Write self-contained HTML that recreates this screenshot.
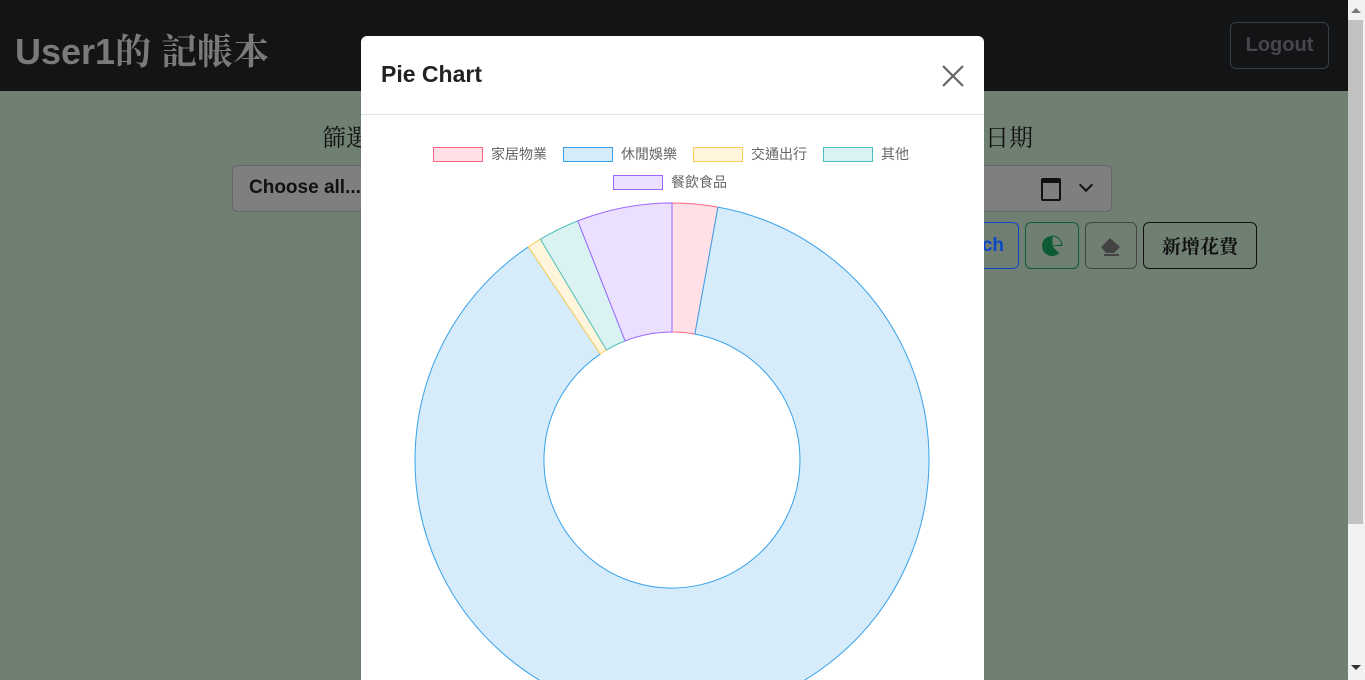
<!DOCTYPE html>
<html><head><meta charset="utf-8"><style>
html,body{margin:0;width:1365px;height:680px;overflow:hidden}
body{background:#6f8072;font-family:"Liberation Sans","Noto Sans CJK TC",sans-serif;position:relative}
.nav{position:absolute;left:0;top:0;width:1348px;height:91px;background:#131416}
.brand{position:absolute;left:15px;top:24px;font-size:36px;font-weight:bold;color:#7a7a7a;font-family:"Liberation Sans","Noto Serif CJK SC",serif}
.logout{position:absolute;left:1230px;top:22px;width:97px;height:45px;border:1px solid #3a3d41;border-radius:6px;color:#45474a;font-size:20px;font-weight:bold;text-align:center;line-height:45px}
.h{position:absolute;top:118px;font-size:24px;color:#111;font-family:"Noto Serif CJK SC",serif}
.sel{position:absolute;left:232px;top:165px;width:878px;height:45px;background:#7f7f7f;border:1px solid #656565;border-radius:6px}
.btn{position:absolute;top:222px;height:47px;border-radius:6px;box-sizing:border-box}
.scroll{position:absolute;left:1348px;top:0;width:17px;height:680px;background:#f1f1f1}
.thumb{position:absolute;left:1346px;top:20px;width:15px;height:504px;background:#c1c1c1;margin-left:2px}
.modal{position:absolute;left:361px;top:36px;width:623px;height:644px;background:#fff;border-radius:6px 6px 0 0;overflow:hidden}
.mt{position:absolute;left:20px;top:25px;font-size:23px;font-weight:bold;color:#222}
.line{position:absolute;left:0;top:78px;width:623px;height:1px;background:#dee2e6}
.lg{position:absolute;font-size:14px;color:#666;font-family:"Noto Sans CJK TC",sans-serif}
.sw{position:absolute;width:48px;height:13px;border:1px solid}
</style></head><body>
<div class="nav"><div class="brand">User1的 記帳本</div><div class="logout">Logout</div></div>
<div class="h" style="left:322px">篩選</div>
<div class="h" style="left:985px">日期</div>
<div class="sel"><div style="position:absolute;left:16px;top:11px;font-size:19px;font-weight:bold;color:#111">Choose all...</div>
<div style="position:absolute;left:808px;top:12px;width:16px;height:16px;border:2px solid #111;border-top-width:5px;border-radius:2px"></div>
<div style="position:absolute;left:848px;top:14px;width:8px;height:8px;border-right:2px solid #111;border-bottom:2px solid #111;transform:rotate(45deg)"></div></div>
<div class="btn" style="left:960px;width:59px;border:1px solid #0d47c8;color:#0d47c8;font-weight:bold;font-size:19px;line-height:45px;text-align:right;padding-right:14px">ch</div>
<div class="btn" style="left:1025px;width:54px;border:1px solid #105b30"><svg width="52" height="44" viewBox="0 0 52 44"><circle cx="26" cy="23" r="10" fill="#0e5a33"/><path d="M26 23 L36 23 A10 10 0 0 1 33 30 Z" fill="#6f8072"/><path d="M26 23 L26 13 A10 10 0 0 1 36 22 Z" fill="#6f8072" stroke="#0e5a33"/></svg></div>
<div class="btn" style="left:1085px;width:52px;border:1px solid #444"><svg width="50" height="44" viewBox="0 0 50 44"><path d="M15 24 L24 15 L34 24 L28 30 L20 30 Z" fill="#444"/><path d="M18 32 H33" stroke="#444" stroke-width="2"/></svg></div>
<div class="btn" style="left:1143px;width:114px;border:1px solid #111;font-size:19px;text-align:center;line-height:45px;font-family:'Noto Serif CJK SC',serif;font-weight:bold;color:#111">新增花費</div>
<div class="scroll"></div><div class="thumb"></div>
<div style="position:absolute;left:1351px;top:8px;border:5px solid transparent;border-bottom-color:#777;border-top:0"></div>
<div style="position:absolute;left:1351px;top:665px;border:5px solid transparent;border-top-color:#333;border-bottom:0"></div>
<div class="modal">
<div class="mt">Pie Chart</div>
<svg style="position:absolute;left:580px;top:28px" width="24" height="24"><path d="M2 2L22 22M22 2L2 22" stroke="#666" stroke-width="2.2"/></svg>
<div class="line"></div>
<div class="sw" style="left:72px;top:111px;background:#ffe0e6;border-color:#ff6384"></div><div class="lg" style="left:130px;top:108px">家居物業</div>
<div class="sw" style="left:202px;top:111px;background:#d7ecfb;border-color:#36a2eb"></div><div class="lg" style="left:260px;top:108px">休閒娛樂</div>
<div class="sw" style="left:332px;top:111px;background:#fff5dd;border-color:#ffcd56"></div><div class="lg" style="left:390px;top:108px">交通出行</div>
<div class="sw" style="left:462px;top:111px;background:#dbf2f2;border-color:#4bc0c0"></div><div class="lg" style="left:520px;top:108px">其他</div>
<div class="sw" style="left:252px;top:139px;background:#ebe0ff;border-color:#9966ff"></div><div class="lg" style="left:310px;top:136px">餐飲食品</div>
<svg style="position:absolute;left:-361px;top:-36px" width="1365" height="680">
<path d="M672 203 A257 257 0 0 1 717.95 207.1 L694.9 334.1 A128 128 0 0 0 672 332 Z" fill="#ffe0e6" stroke="#ff6384"/>
<path d="M717.95 207.1 A257 257 0 1 1 528.3 246.9 L600.4 353.9 A128 128 0 1 0 694.9 334.1 Z" fill="#d7ecfb" stroke="#36a2eb"/>
<path d="M528.3 246.9 A257 257 0 0 1 540.4 239.2 L606.5 350 A128 128 0 0 0 600.4 353.9 Z" fill="#fff5dd" stroke="#ffcd56"/>
<path d="M540.4 239.2 A257 257 0 0 1 577.8 220.9 L625.1 340.9 A128 128 0 0 0 606.5 350 Z" fill="#dbf2f2" stroke="#4bc0c0"/>
<path d="M577.8 220.9 A257 257 0 0 1 672 203 L672 332 A128 128 0 0 0 625.1 340.9 Z" fill="#ebe0ff" stroke="#9966ff"/>
</svg>
</div>
</body></html>
